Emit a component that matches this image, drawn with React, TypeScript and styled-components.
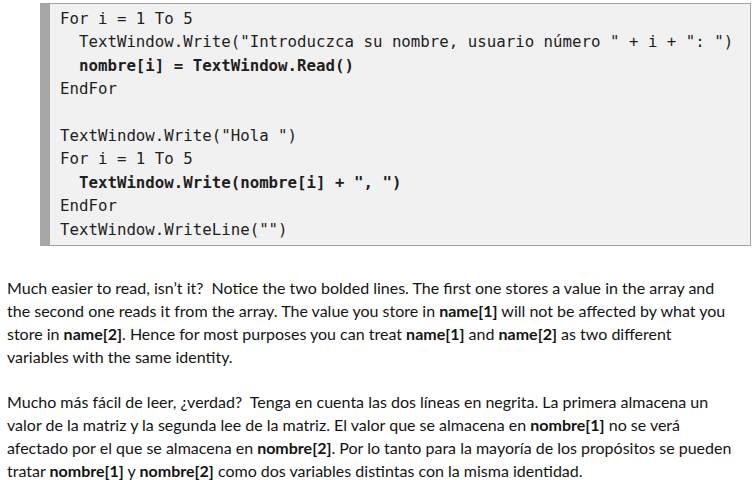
import React from "react";
import styled, { createGlobalStyle } from "styled-components";

const Global = createGlobalStyle`
  html, body { margin: 0; padding: 0; background: #ffffff; }
  body { width: 756px; height: 480px; overflow: hidden; }
`;

const Page = styled.div`
  display: flex;
  flex-direction: column;
  padding: 3px 5px 0 7px;
`;

const CodeBox = styled.pre`
  margin: 0 0 0 33px;
  width: 711px;
  box-sizing: border-box;
  background: #f1f1f1;
  border: 1px solid #a3a3a3;
  border-left: 10px solid #a6a6a6;
  padding: 3px 0 4px 10px;
  font-family: "DejaVu Sans Mono", monospace;
  font-size: 15.75px;
  line-height: 23.4px;
  color: #1e1e1e;
  white-space: pre;
`;

const CodeLine = styled.div<{ $bold?: boolean }>`
  height: 23.4px;
  font-weight: ${(p) => (p.$bold ? 700 : 400)};
`;

const Para = styled.div<{ $gap: number }>`
  margin-top: ${(p) => p.$gap}px;
  font-family: Lato, "Liberation Sans", sans-serif;
  font-size: 16px;
  line-height: 23px;
  color: #141414;
`;

const Line = styled.div`
  white-space: pre;
`;

const B = styled.b`
  font-weight: 700;
`;

const code: { t: string; b?: boolean }[] = [
  { t: "For i = 1 To 5" },
  { t: '  TextWindow.Write("Introduczca su nombre, usuario número " + i + ": ")' },
  { t: "  nombre[i] = TextWindow.Read()", b: true },
  { t: "EndFor" },
  { t: "" },
  { t: 'TextWindow.Write("Hola ")' },
  { t: "For i = 1 To 5" },
  { t: '  TextWindow.Write(nombre[i] + ", ")', b: true },
  { t: "EndFor" },
  { t: 'TextWindow.WriteLine("")' },
];

export default function App() {
  return (
    <>
      <Global />
      <Page>
        <CodeBox>
          {code.map((l, i) => (
            <CodeLine key={i} $bold={l.b}>
              {l.t || " "}
            </CodeLine>
          ))}
        </CodeBox>
        <Para $gap={30}>
          <Line>Much easier to read, isn’t it?  Notice the two bolded lines. The first one stores a value in the array and</Line>
          <Line>
            the second one reads it from the array. The value you store in <B>name[1]</B> will not be affected by what you
          </Line>
          <Line>
            store in <B>name[2]</B>. Hence for most purposes you can treat <B>name[1]</B> and <B>name[2]</B> as two different
          </Line>
          <Line>variables with the same identity.</Line>
        </Para>
        <Para $gap={22}>
          <Line>Mucho más fácil de leer, ¿verdad?  Tenga en cuenta las dos líneas en negrita. La primera almacena un</Line>
          <Line>
            valor de la matriz y la segunda lee de la matriz. El valor que se almacena en <B>nombre[1]</B> no se verá
          </Line>
          <Line>
            afectado por el que se almacena en <B>nombre[2]</B>. Por lo tanto para la mayoría de los propósitos se pueden
          </Line>
          <Line>
            tratar <B>nombre[1]</B> y <B>nombre[2]</B> como dos variables distintas con la misma identidad.
          </Line>
        </Para>
      </Page>
    </>
  );
}
